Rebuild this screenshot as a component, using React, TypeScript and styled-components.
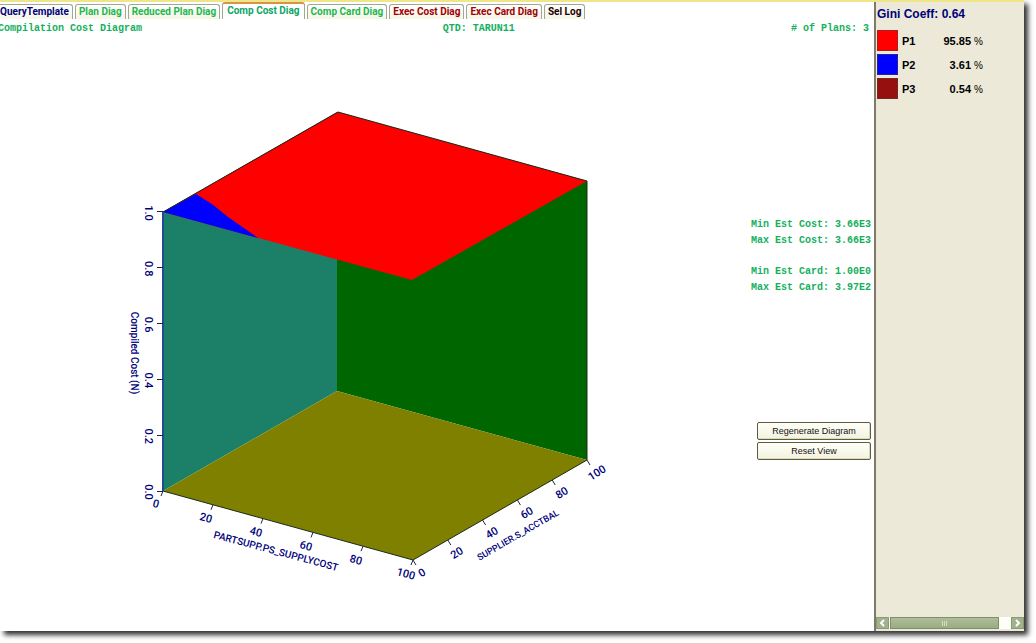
import React from "react";
import styled, { createGlobalStyle } from "styled-components";

const NAVY = "#00007b";
const GREEN = "#14b05c";
const MAROON = "#a00000";

const GlobalStyle = createGlobalStyle`
  * { box-sizing: border-box; }
  body {
    margin: 0;
    background: #fff;
    font-family: "Liberation Sans", Arial, sans-serif;
    overflow: hidden;
  }
`;

const Page = styled.div`
  display: flex;
  min-height: 100vh;
  padding: 0 12px 12px 0;
`;

const Frame = styled.div`
  display: flex;
  flex: 1;
  border-top: 2px solid #efe68a;
  background: #fff;
  box-shadow: 4px 4px 5px #333;
`;

const Main = styled.main`
  display: flex;
  flex: 1;
  flex-direction: column;
  min-width: 0;
`;

const TabBar = styled.nav`
  display: flex;
  align-items: flex-end;
  gap: 2px;
  height: 17px;
`;

const Tab = styled.button<{ $color: string; $active?: boolean; $first?: boolean }>`
  height: ${(p) => (p.$active ? 17 : 15)}px;
  padding: ${(p) => (p.$active ? "0 4px 2px" : p.$first ? "0 3px 0 0" : "0 3px")};
  border: 1px solid #a5a596;
  border-bottom: 0;
  border-left-width: ${(p) => (p.$first ? 0 : 1)}px;
  border-top: ${(p) => (p.$active ? "2px solid #d9924a" : "1px solid #a5a596")};
  border-radius: ${(p) => (p.$first ? "0 3px 0 0" : "3px 3px 0 0")};
  background: ${(p) => (p.$active ? "#fff" : "linear-gradient(#fff, #f6f5e6)")};
  color: ${(p) => p.$color};
  font: bold 10px/14px Roboto, "Liberation Sans", Arial, sans-serif;
  white-space: nowrap;
`;

const Caption = styled.header`
  display: grid;
  grid-template-columns: 5fr auto 4fr;
  padding: 0 5px 0 0;
  margin-top: 2px;
  color: ${GREEN};
  font: bold 10px/16px "Liberation Mono", monospace;

  h1 {
    margin: 0 0 0 -2px;
    font: inherit;
  }
  span:last-child {
    text-align: right;
  }
`;

const Body = styled.div`
  display: flex;
  flex: 1;
`;

const Plot = styled.div`
  display: flex;
  flex: 1;
  justify-content: center;
  padding-top: 63px;
`;

const Side = styled.div`
  display: flex;
  flex-direction: column;
  align-items: flex-end;
  width: 144px;
  padding: 180px 3px 0 0;
`;

const Stats = styled.dl`
  display: flex;
  gap: 6px;
  margin: 0;
  color: ${GREEN};
  font: bold 10px/16px "Liberation Mono", monospace;
  white-space: nowrap;

  & + & {
    margin-top: 15px;
  }
  dt, dd {
    margin: 0;
  }
`;

const Actions = styled.div`
  display: flex;
  flex-direction: column;
  gap: 2px;
  width: 114px;
  margin-top: 126px;
`;

const ActionButton = styled.button`
  height: 18px;
  padding: 0;
  border: 1px solid #5c5c40;
  border-radius: 2px;
  background: linear-gradient(#fffffa, #f3f2de);
  box-shadow: inset -1px -1px #dcdabd;
  color: #111;
  font: 9px/16px "Liberation Sans", Arial, sans-serif;
`;

const Legend = styled.aside`
  display: flex;
  flex-direction: column;
  width: 150px;
  border-left: 2px solid #7d7a68;
  background: #ece9d8;
`;

const Gini = styled.h2`
  margin: 4px 0 6px 1px;
  color: ${NAVY};
  font: bold 12px/16px "Liberation Sans", Arial, sans-serif;
`;

const LegendTable = styled.table`
  border-collapse: collapse;
  margin-left: 1px;
  width: 116px;
  table-layout: fixed;
  font: bold 11px/18px "Liberation Sans", Arial, sans-serif;
  color: #000;

  tr {
    height: 24px;
  }
  td, th {
    padding: 2px 0 0;
    font-weight: bold;
  }
  td:first-child {
    width: 25px;
    padding: 0;
  }
  th {
    width: 30px;
    text-align: left;
  }
  td:last-child {
    padding-right: 10px;
    text-align: right;
    white-space: nowrap;
  }
  small {
    font-size: 10px;
    font-weight: normal;
  }
`;

const Swatch = styled.div<{ $color: string }>`
  width: 21px;
  height: 21px;
  border: 1px solid rgba(90, 60, 60, 0.5);
  background: ${(p) => p.$color};
`;

const ScrollBar = styled.div`
  display: flex;
  align-items: stretch;
  height: 12px;
  margin-top: auto;
  margin-bottom: 2px;
  background: #fdfdfa;
`;

const ScrollButton = styled.button`
  display: flex;
  align-items: center;
  justify-content: center;
  width: 13px;
  padding: 0;
  border: 1px solid #8b9b78;
  background: #a0b18b;
`;

const Thumb = styled.div`
  display: flex;
  flex: 1;
  align-items: center;
  justify-content: center;
  gap: 1px;
  margin: 0 12px 0 1px;
  border: 1px solid #7f8f6c;
  background: linear-gradient(#adbd98, #9aac84);

  i {
    width: 1px;
    height: 5px;
    background: #d5dfc8;
  }
`;

const AxisText = styled.text<{ $size?: number }>`
  fill: ${NAVY};
  stroke: none;
  font-family: Roboto, "Liberation Sans", Arial, sans-serif;
  font-size: ${(p) => p.$size ?? 11}px;
  font-weight: 500;
  text-anchor: middle;
  dominant-baseline: central;
`;

const TABS = [
  { label: "QueryTemplate", color: NAVY },
  { label: "Plan Diag", color: "#1fb84e" },
  { label: "Reduced Plan Diag", color: "#1fb84e" },
  { label: "Comp Cost Diag", color: "#10a564", active: true },
  { label: "Comp Card Diag", color: "#1fb84e" },
  { label: "Exec Cost Diag", color: MAROON },
  { label: "Exec Card Diag", color: MAROON },
  { label: "Sel Log", color: "#1c0000" },
];

const PLANS = [
  { name: "P1", color: "#ff0000", share: "95.85" },
  { name: "P2", color: "#0000ff", share: "3.61" },
  { name: "P3", color: "#961010", share: "0.54" },
];

const STATS = [
  [["Min Est Cost:", "3.66E3"], ["Max Est Cost:", "3.66E3"]],
  [["Min Est Card:", "1.00E0"], ["Max Est Card:", "3.97E2"]],
];

const STEPS = [0, 1, 2, 3, 4, 5];

function CostCube() {
  return (
    <svg width="510" height="490" viewBox="110 100 510 490" role="img" aria-label="Compiled cost surface">
      <polygon points="163,212 337,112 337,391 163,491" fill="#1b8067" />
      <polygon points="337,112 587,181 587,460 337,391" fill="#006600" />
      <polygon points="163,491 337,391 587,460 413,560" fill="#808000" />
      <polygon points="163,212 338,112 587,181 412,280" fill="#ff0000" />
      <polygon points="163,212 196,194 212,204 228,217 258,238" fill="#0000ff" />
      <g fill="none" stroke="#1a2a1a">
        <path d="M163 212L338 112L587 181" />
        <path d="M587 181V460L413 560L163 491" />
        <path d="M163 212V491" stroke="#234a9a" strokeWidth="2" />
      </g>
      <g stroke="#222244">
        {STEPS.map((i) => (
          <g key={i}>
            <path d={`M157 ${491.5 - i * 56}h6`} />
            <path d={`M${163 + i * 50} ${491 + i * 13.8}l-2 5`} />
            <path d={`M${413 + i * 34.8} ${560 - i * 20}l3 5`} />
            <AxisText transform={`translate(148 ${492 - i * 55.8}) rotate(90)`}>{(i / 5).toFixed(1)}</AxisText>
            <AxisText transform={`translate(${156 + i * 50} ${504 + i * 14}) rotate(15)`}>{i * 20}</AxisText>
            <AxisText transform={`translate(${422 + i * 35} ${573 - i * 20}) rotate(-32)`}>{i * 20}</AxisText>
          </g>
        ))}
      </g>
      <AxisText $size={10} transform="translate(134 353) rotate(90)">Compiled Cost (N)</AxisText>
      <AxisText $size={10} transform="translate(276 551) rotate(15)">PARTSUPP.PS_SUPPLYCOST</AxisText>
      <AxisText $size={9} transform="translate(518 535) rotate(-30)">SUPPLIER.S_ACCTBAL</AxisText>
    </svg>
  );
}

export default function App() {
  return (
    <Page>
      <GlobalStyle />
      <Frame>
        <Main>
          <TabBar>
            {TABS.map((t, i) => (
              <Tab key={t.label} type="button" $color={t.color} $active={t.active} $first={i === 0}>
                {t.label}
              </Tab>
            ))}
          </TabBar>
          <Caption>
            <h1>Compilation Cost Diagram</h1>
            <span>QTD: TARUN11</span>
            <span># of Plans: 3</span>
          </Caption>
          <Body>
            <Plot>
              <CostCube />
            </Plot>
            <Side>
              {STATS.map((group) => (
                <Stats key={group[0][0]}>
                  <div>
                    {group.map(([name]) => (
                      <dt key={name}>{name}</dt>
                    ))}
                  </div>
                  <div>
                    {group.map(([name, value]) => (
                      <dd key={name}>{value}</dd>
                    ))}
                  </div>
                </Stats>
              ))}
              <Actions>
                <ActionButton type="button">Regenerate Diagram</ActionButton>
                <ActionButton type="button">Reset View</ActionButton>
              </Actions>
            </Side>
          </Body>
        </Main>
        <Legend>
          <Gini>Gini Coeff: 0.64</Gini>
          <LegendTable>
            <tbody>
              {PLANS.map((p) => (
                <tr key={p.name}>
                  <td>
                    <Swatch $color={p.color} />
                  </td>
                  <th scope="row">{p.name}</th>
                  <td>
                    {p.share} <small>%</small>
                  </td>
                </tr>
              ))}
            </tbody>
          </LegendTable>
          <ScrollBar>
            <ScrollButton type="button" aria-label="Scroll left">
              <svg width="7" height="8" fill="none" stroke="#fff" strokeWidth="2">
                <path d="M5 1L2 4L5 7" />
              </svg>
            </ScrollButton>
            <Thumb>
              <i />
              <i />
              <i />
            </Thumb>
            <ScrollButton type="button" aria-label="Scroll right">
              <svg width="7" height="8" fill="none" stroke="#fff" strokeWidth="2">
                <path d="M2 1L5 4L2 7" />
              </svg>
            </ScrollButton>
          </ScrollBar>
        </Legend>
      </Frame>
    </Page>
  );
}
